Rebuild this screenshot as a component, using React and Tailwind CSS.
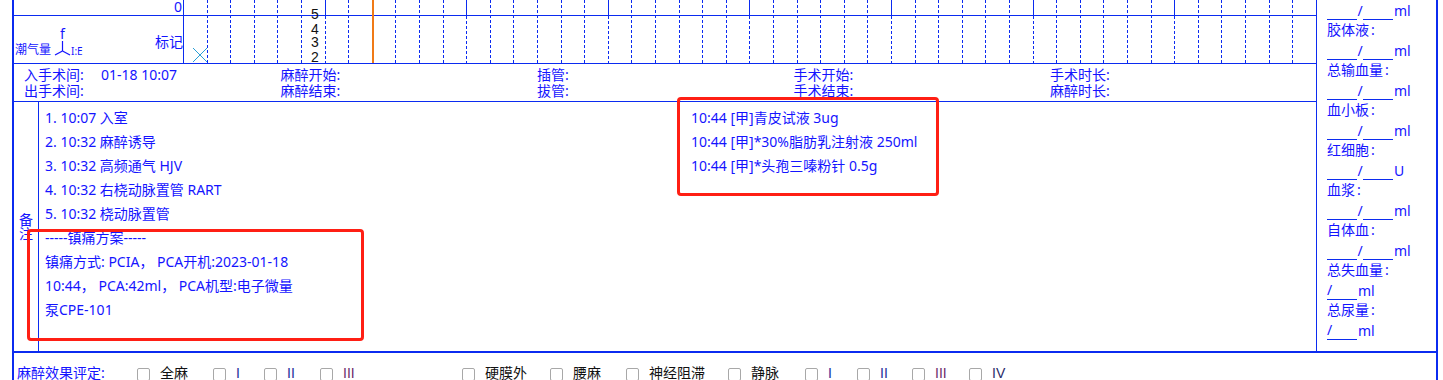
const LINE = "#0b2bf0";

const Grid = () => {
  const step = 23.6;
  const lines = [];
  for (let i = 1; i < 48; i++) {
    if (i === 8) continue;
    const x = Math.round(i * step - 1) + 0.5;
    if (i % 6 === 0) {
      lines.push(<line key={"s" + i} x1={x} x2={x} y1={0} y2={15} stroke={LINE} />);
      lines.push(
        <line key={"d" + i} x1={x} x2={x} y1={16} y2={63} stroke={LINE} strokeDasharray="3 2" />
      );
    } else {
      lines.push(
        <line key={"d" + i} x1={x} x2={x} y1={0} y2={63} stroke={LINE} strokeDasharray="3 2" />
      );
    }
  }
  return (
    <svg width="1132" height="63" className="block shrink-0">
      {lines}
      <line x1={0} x2={1132} y1={15.5} y2={15.5} stroke={LINE} />
      <line x1={189} x2={189} y1={0} y2={63} stroke="#f07a16" strokeWidth="2" />
      <g fill="#111" fontSize="14" fontFamily="Liberation Sans, sans-serif" textAnchor="middle">
        <text x="131" y="19">5</text>
        <text x="131" y="34">4</text>
        <text x="131" y="47">3</text>
        <text x="131" y="62">2</text>
      </g>
      <g stroke="#2b9fd6" strokeWidth="1">
        <line x1="9" y1="48" x2="23" y2="62" />
        <line x1="23" y1="48" x2="9" y2="62" />
      </g>
    </svg>
  );
};

const infoCols = [
  ["入手术间:", "01-18 10:07", "出手术间:"],
  ["麻醉开始:", "", "麻醉结束:"],
  ["插管:", "", "拔管:"],
  ["手术开始:", "", "手术结束:"],
  ["手术时长:", "", "麻醉时长:"],
];

const notesLeft = [
  "1. 10:07 入室",
  "2. 10:32 麻醉诱导",
  "3. 10:32 高频通气 HJV",
  "4. 10:32 右桡动脉置管 RART",
  "5. 10:32 桡动脉置管",
  "-----镇痛方案-----",
  "镇痛方式: PCIA， PCA开机:2023-01-18",
  "10:44， PCA:42ml， PCA机型:电子微量",
  "泵CPE-101",
];

const notesRight = [
  "10:44 [甲]青皮试液 3ug",
  "10:44 [甲]*30%脂肪乳注射液 250ml",
  "10:44 [甲]*头孢三嗪粉针 0.5g",
];

const DoubleEntry = ({ unit = "ml" }) => (
  <div className="flex h-[20px] items-end">
    <span className="inline-block h-[19px] w-[30px] border-b border-[#0b2bf0]" />
    <span className="w-[6px] text-center leading-[18px]">/</span>
    <span className="inline-block h-[19px] w-[30px] border-b border-[#0b2bf0]" />
    <span className="ml-[1px] leading-[18px]">{unit}</span>
  </div>
);

const SingleEntry = () => (
  <div className="flex h-[20px] items-end">
    <span className="inline-block h-[19px] w-[30px] border-b border-[#0b2bf0] leading-[18px]">/</span>
    <span className="ml-[1px] leading-[18px]">ml</span>
  </div>
);

const Label = ({ children }) => (
  <div className="h-[20px] leading-[20px]">
    {children}
    <span className="ml-[2px]">:</span>
  </div>
);

const Check = () => (
  <span className="mt-[5px] inline-block h-[13px] w-[13px] shrink-0 rounded-[2px] border border-[#a8a8a8] bg-white" />
);

const effects = [
  { label: "全麻", w: "w-[76px]", c: "text-[#111]" },
  { label: "I", w: "w-[51px]", c: "text-[#1a2a9a]" },
  { label: "II", w: "w-[56px]", c: "text-[#1a2a9a]" },
  { label: "III", w: "w-[142px]", c: "text-[#6b2a6b]" },
  { label: "硬膜外", w: "w-[88px]", c: "text-[#111]" },
  { label: "腰麻", w: "w-[76px]", c: "text-[#111]" },
  { label: "神经阻滞", w: "w-[102px]", c: "text-[#111]" },
  { label: "静脉", w: "w-[77px]", c: "text-[#111]" },
  { label: "I", w: "w-[52px]", c: "text-[#1a2a9a]" },
  { label: "II", w: "w-[55px]", c: "text-[#1a2a9a]" },
  { label: "III", w: "w-[57px]", c: "text-[#6b2a6b]" },
  { label: "IV", w: "w-[60px]", c: "text-[#2a2a6a]" },
];

export default function App() {
  return (
    <div className="relative h-[380px] w-[1443px] overflow-hidden bg-white text-[14px] text-[#1414ff] [font-family:'Noto_Sans','Noto_Sans_CJK_SC',sans-serif]">
      <div className="ml-[12px] flex h-full w-[1426px] flex-col border-x-2 border-[#0b2bf0]">
        <div className="flex h-[351px] shrink-0">
          <div className="flex w-[1302px] flex-col">
            {/* chart header */}
            <div className="flex h-[63px]">
              <div className="flex w-[170px] flex-col border-r border-[#0b2bf0]">
                <div className="h-[16px] border-b border-[#0b2bf0] pr-[1px] text-right leading-[13px]">0</div>
                <div className="flex h-[47px] justify-between">
                  <div className="flex items-end pb-[7px] pl-[1px]">
                    <span className="text-[12px] leading-[12px]">潮气量</span>
                    <div className="ml-[3px] flex w-[17px] flex-col items-center">
                      <span className="text-[14px] leading-[14px]">f</span>
                      <svg width="17" height="15" className="block">
                        <g stroke="#1414ff" strokeWidth="1.2" fill="none">
                          <line x1="8.5" y1="0" x2="8.5" y2="10" />
                          <line x1="8.5" y1="10" x2="1" y2="14" />
                          <line x1="8.5" y1="10" x2="16" y2="14" />
                        </g>
                      </svg>
                    </div>
                    <span className="text-[10px] leading-[10px]">I:E</span>
                  </div>
                  <span className="mt-[18px] leading-[16px]">标记</span>
                </div>
              </div>
              <Grid />
            </div>

            {/* times */}
            <div className="flex h-[39px] border-y border-[#0b2bf0] pl-[10px] pt-[3px] leading-[16px]">
              {infoCols.map(([a, v, b], i) => (
                <div key={i} className="w-[256.5px]">
                  <div className="flex">
                    <span className="w-[77px]">{a}</span>
                    <span>{v}</span>
                  </div>
                  <div>{b}</div>
                </div>
              ))}
            </div>

            {/* notes */}
            <div className="flex h-[249px]">
              <div className="flex w-[25px] flex-col items-center justify-center border-r border-[#0b2bf0] leading-[14px]">
                <span>备</span>
                <span>注</span>
              </div>
              <div className="flex pl-[6px] pt-[4px] leading-[24px]">
                <div className="w-[646px]">
                  {notesLeft.map((t, i) => (
                    <div key={i}>{t}</div>
                  ))}
                </div>
                <div>
                  {notesRight.map((t, i) => (
                    <div key={i}>{t}</div>
                  ))}
                </div>
              </div>
            </div>
          </div>

          {/* fluids */}
          <div className="w-[120px] border-l border-[#0b2bf0] pl-[10px]">
            <DoubleEntry />
            <Label>胶体液</Label>
            <DoubleEntry />
            <Label>总输血量</Label>
            <DoubleEntry />
            <Label>血小板</Label>
            <DoubleEntry />
            <Label>红细胞</Label>
            <DoubleEntry unit="U" />
            <Label>血浆</Label>
            <DoubleEntry />
            <Label>自体血</Label>
            <DoubleEntry />
            <Label>总失血量</Label>
            <SingleEntry />
            <Label>总尿量</Label>
            <SingleEntry />
          </div>
        </div>

        {/* effect rating */}
        <div className="flex flex-1 items-start border-t-2 border-[#0b2bf0] pt-[10px] leading-[20px]">
          <div className="w-[123px] pl-[3px]">麻醉效果评定:</div>
          {effects.map((e, i) => (
            <div key={i} className={`flex shrink-0 ${e.w}`}>
              <Check />
              <span className={`ml-[10px] [font-family:'Liberation_Sans','Noto_Sans_CJK_SC',sans-serif] ${e.c}`}>
                {e.label}
              </span>
            </div>
          ))}
        </div>
      </div>

      {/* red highlight boxes */}
      <div className="absolute left-[27px] top-[229px] h-[112px] w-[337px] rounded-[4px] border-[3px] border-[#ff1f14]" />
      <div className="absolute left-[677px] top-[97px] h-[99px] w-[262px] rounded-[4px] border-[3px] border-[#ff1f14]" />
    </div>
  );
}
